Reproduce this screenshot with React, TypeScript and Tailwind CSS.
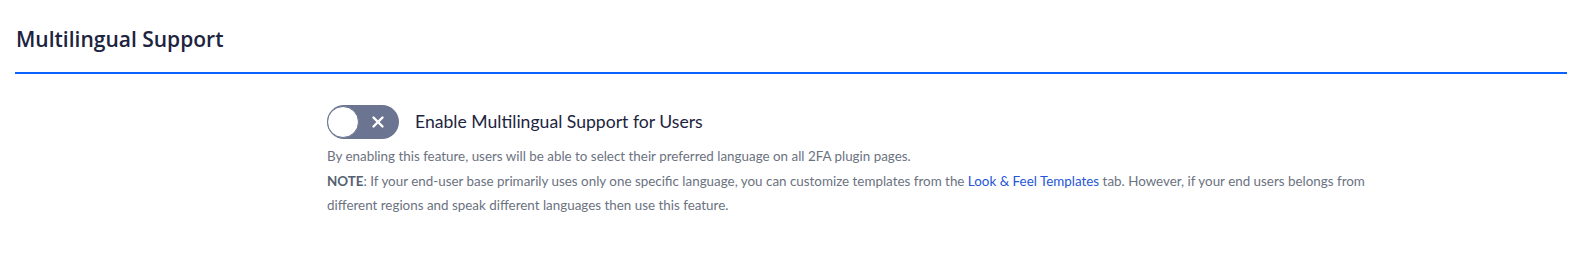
import { X } from "lucide-react";

export default function App() {
  return (
    <div className="min-h-[255px] bg-white px-[15px] font-['Lato',sans-serif]">
      <div className="border-b-2 border-[#0b63ff] pt-[25px] pb-[19px] pl-px">
        <h2 className="font-['Open_Sans',sans-serif] text-[21px] leading-7 font-semibold text-[#1d2440]">
          Multilingual Support
        </h2>
      </div>

      <div className="flex pt-[31px]">
        <div className="w-[312px] shrink-0" />
        <div className="w-[1060px]">
          <div className="flex items-center gap-4">
            <button className="relative flex h-[34px] w-[72px] items-center rounded-full bg-[#6b7490]">
              <span className="absolute left-0 top-[1px] h-[32px] w-[32px] rounded-full border border-[#6b7490] bg-white" />
              <X className="ml-auto mr-[12px] h-[18px] w-[18px] text-white" strokeWidth={3.2} />
            </button>
            <span className="text-[17.6px] text-[#1d2440]">
              Enable Multilingual Support for Users
            </span>
          </div>

          <div className="mt-[5px] text-[13.4px] leading-[24.5px] text-[#6b7280]">
            <p>
              By enabling this feature, users will be able to select their preferred language on all 2FA plugin pages.
            </p>
            <p>
              <span className="font-bold text-[#556070]">NOTE</span>: If your end-user base primarily uses only one
              specific language, you can customize templates from the{" "}
              <a className="text-[#2456d6]">Look &amp; Feel Templates</a> tab. However, if your end users belongs from
              different regions and speak different languages then use this feature.
            </p>
          </div>
        </div>
      </div>
    </div>
  );
}
